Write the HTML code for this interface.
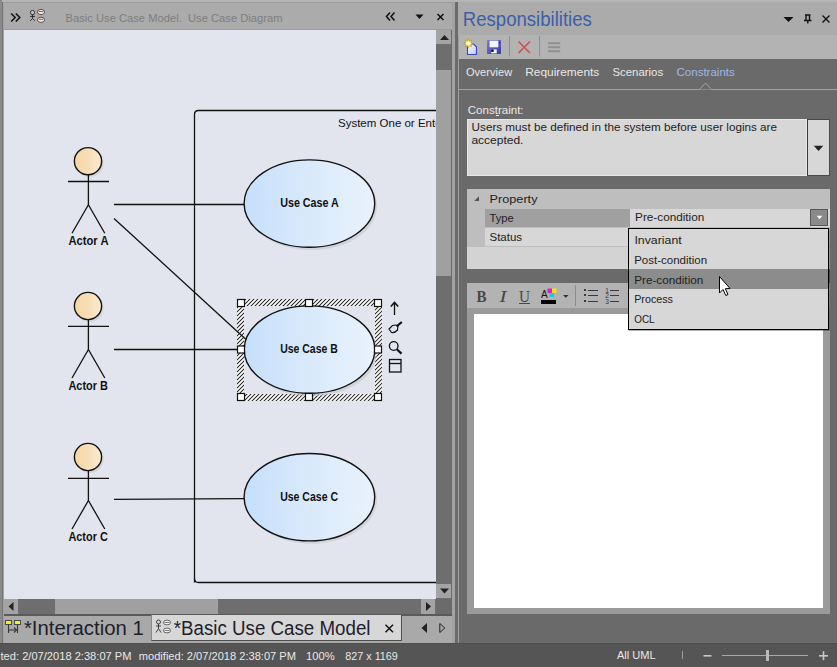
<!DOCTYPE html>
<html><head><meta charset="utf-8">
<style>
*{margin:0;padding:0;box-sizing:border-box}
html,body{width:837px;height:667px;overflow:hidden;background:#6a6a6a;font-family:"Liberation Sans",sans-serif}
.a{position:absolute}
.t{position:absolute;white-space:pre;line-height:1}
.lb{font-family:"Liberation Sans",sans-serif;font-weight:bold;font-size:12.5px;fill:#111}
.sys{font-family:"Liberation Sans",sans-serif;font-size:11.5px;fill:#111}
</style></head><body>
<div class="a" style="left:0;top:0;width:837px;height:2px;background:#b4b4b4"></div>
<div class="a" style="left:0;top:0;width:2px;height:643px;background:#8a8a8a"></div>
<div class="a" style="left:2px;top:2px;width:1px;height:641px;background:#767676"></div>
<div class="a" style="left:3px;top:2px;width:1px;height:641px;background:#a2a2a2"></div>

<!-- LEFT PANEL header -->
<div class="a" style="left:4px;top:2px;width:448px;height:1px;background:#9c9c9c"></div>
<div class="a" style="left:4px;top:3px;width:448px;height:26px;background:#ababab"></div>
<div class="a" style="left:4px;top:29px;width:448px;height:1px;background:#9c9c9c"></div>
<svg class="a" style="left:0;top:0" width="452" height="30" viewBox="0 0 452 30">
<g fill="none" stroke="#111" stroke-width="1.5">
<polyline points="11.2,13.4 15.2,17.5 11.2,21.6"/><polyline points="15.8,13.4 19.8,17.5 15.8,21.6"/>
<polyline points="390,12.5 386.5,16.5 390,20.5"/><polyline points="394.5,12.5 391,16.5 394.5,20.5"/>
<path d="M437.5 14 L443.5 20 M443.5 14 L437.5 20"/>
</g>
<path d="M415.5 14.5 H423.5 L419.5 19 Z" fill="#111"/>
<g fill="none" stroke="#222" stroke-width="0.9">
<circle cx="32.5" cy="12.5" r="2.1" fill="#c8c8c8"/><line x1="32.5" y1="14.6" x2="32.5" y2="18.4"/><line x1="30" y1="16.4" x2="35" y2="16.4"/>
<polyline points="30.2,20.8 32.5,18.4 34.8,20.8"/>
</g>
<g stroke="#444" stroke-width="0.9" fill="#fbe9da">
<ellipse cx="41" cy="12" rx="3.6" ry="2.6"/><ellipse cx="41" cy="19.8" rx="3.6" ry="2.6"/>
</g>
<g stroke="#444" stroke-width="0.8"><line x1="38.8" y1="11.5" x2="43.2" y2="11.5"/><line x1="38.8" y1="19.3" x2="43.2" y2="19.3"/></g>
</svg>

<div class="a" style="left:4px;top:30px;width:432px;height:569px;background:#e2e5ed"></div>
<svg class="a" style="left:0;top:0" width="437" height="599" viewBox="0 0 437 599">
<defs>
<linearGradient id="ag" x1="0" x2="1" y1="0" y2="0"><stop offset="0" stop-color="#f5d4a0"/><stop offset="1" stop-color="#fbe9cf"/></linearGradient>
<linearGradient id="ug" x1="0" x2="1" y1="0" y2="0"><stop offset="0" stop-color="#c5dffb"/><stop offset="0.45" stop-color="#d8e9fb"/><stop offset="1" stop-color="#e9f2fc"/></linearGradient>
<pattern id="hp" width="2.83" height="4" patternUnits="userSpaceOnUse" patternTransform="rotate(45)"><rect width="2.83" height="4" fill="#fff"/><rect width="0.85" height="4" fill="#111"/></pattern>
<clipPath id="cc"><rect x="4" y="30" width="432" height="569"/></clipPath>
</defs>
<g clip-path="url(#cc)">
<path d="M194.5 582.5 V114.5 Q194.5 110.5 198.5 110.5 H460" fill="none" stroke="#111" stroke-width="1.3"/>
<path d="M194.5 578.5 Q194.5 582.5 198.5 582.5 H460" fill="none" stroke="#111" stroke-width="1.3"/>
<text x="338" y="127" class="sys">System One or Enterprise</text>
<line x1="114" y1="204.5" x2="244" y2="204.5" stroke="#111" stroke-width="1.3"/>
<line x1="114" y1="349.5" x2="244" y2="349.5" stroke="#111" stroke-width="1.3"/>
<line x1="114" y1="499.3" x2="244" y2="498.6" stroke="#111" stroke-width="1.3"/>
<circle cx="89.6" cy="163.2" r="14" fill="#c4c6cc" opacity="0.5"/>
<circle cx="88" cy="161.2" r="13.6" fill="url(#ag)" stroke="#111" stroke-width="1.4"/>
<line x1="88.4" y1="174.7" x2="88.4" y2="204.7" stroke="#111" stroke-width="1.3"/>
<line x1="68" y1="181.5" x2="109" y2="181.5" stroke="#111" stroke-width="1.3"/>
<polyline points="72,233.2 88.4,204.7 104.8,233.2" fill="none" stroke="#111" stroke-width="1.3"/>
<text x="68.5" y="244.7" class="lb" textLength="40" lengthAdjust="spacingAndGlyphs">Actor A</text>

<circle cx="89.6" cy="308" r="14" fill="#c4c6cc" opacity="0.5"/>
<circle cx="88" cy="306" r="13.6" fill="url(#ag)" stroke="#111" stroke-width="1.4"/>
<line x1="88.4" y1="319.5" x2="88.4" y2="349.5" stroke="#111" stroke-width="1.3"/>
<line x1="68" y1="326.3" x2="109" y2="326.3" stroke="#111" stroke-width="1.3"/>
<polyline points="72,378 88.4,349.5 104.8,378" fill="none" stroke="#111" stroke-width="1.3"/>
<text x="68.4" y="389.5" class="lb" textLength="39.6" lengthAdjust="spacingAndGlyphs">Actor B</text>

<circle cx="89.6" cy="459" r="14" fill="#c4c6cc" opacity="0.5"/>
<circle cx="88" cy="457" r="13.6" fill="url(#ag)" stroke="#111" stroke-width="1.4"/>
<line x1="88.4" y1="470.5" x2="88.4" y2="500.5" stroke="#111" stroke-width="1.3"/>
<line x1="68" y1="478.3" x2="109" y2="478.3" stroke="#111" stroke-width="1.3"/>
<polyline points="72,529 88.4,500.5 104.8,529" fill="none" stroke="#111" stroke-width="1.3"/>
<text x="68.4" y="540.5" class="lb" textLength="39.4" lengthAdjust="spacingAndGlyphs">Actor C</text>

<ellipse cx="311.4" cy="206.1" rx="65.6" ry="44" fill="#c4c6cc" opacity="0.6"/>
<ellipse cx="309.4" cy="203.6" rx="65.3" ry="43.7" fill="url(#ug)" stroke="#111" stroke-width="1.4"/>
<text x="280.2" y="207.2" class="lb" textLength="58.6" lengthAdjust="spacingAndGlyphs">Use Case A</text>

<path fill-rule="evenodd" fill="url(#hp)" d="M237 299 H382 V401 H237 Z M244 306 H375 V394 H244 Z"/>
<line x1="114" y1="218.4" x2="246" y2="339.5" stroke="#111" stroke-width="1.3"/>
<ellipse cx="311.5" cy="352.1" rx="65.6" ry="44" fill="#c4c6cc" opacity="0.6"/>
<ellipse cx="309.5" cy="349.6" rx="65.3" ry="43.7" fill="url(#ug)" stroke="#111" stroke-width="1.4"/>
<text x="280.2" y="353.20000000000005" class="lb" textLength="57.6" lengthAdjust="spacingAndGlyphs">Use Case B</text>

<ellipse cx="311.4" cy="499.7" rx="65.6" ry="44" fill="#c4c6cc" opacity="0.6"/>
<ellipse cx="309.4" cy="497.2" rx="65.3" ry="43.7" fill="url(#ug)" stroke="#111" stroke-width="1.4"/>
<text x="280.2" y="500.8" class="lb" textLength="57.8" lengthAdjust="spacingAndGlyphs">Use Case C</text>

<rect x="237.5" y="299.5" width="7" height="7" fill="#fff" stroke="#111" stroke-width="1.2"/>
<rect x="237.5" y="346.0" width="7" height="7" fill="#fff" stroke="#111" stroke-width="1.2"/>
<rect x="237.5" y="393.5" width="7" height="7" fill="#fff" stroke="#111" stroke-width="1.2"/>
<rect x="305.5" y="299.5" width="7" height="7" fill="#fff" stroke="#111" stroke-width="1.2"/>
<rect x="305.5" y="393.5" width="7" height="7" fill="#fff" stroke="#111" stroke-width="1.2"/>
<rect x="374.5" y="299.5" width="7" height="7" fill="#fff" stroke="#111" stroke-width="1.2"/>
<rect x="374.5" y="346.0" width="7" height="7" fill="#fff" stroke="#111" stroke-width="1.2"/>
<rect x="374.5" y="393.5" width="7" height="7" fill="#fff" stroke="#111" stroke-width="1.2"/>

<g fill="none" stroke="#111" stroke-width="1.3">
<line x1="394.5" y1="303" x2="394.5" y2="315"/>
<path d="M390.8 306.5 L394.5 302.5 L398.2 306.5" stroke-width="1.6"/>
<path d="M389 329 L392.5 325.5 Q395.5 324.5 398 325.5 L397.5 330 Q395 333 391.5 332.5 Z" stroke-width="1.2"/>
<line x1="396.5" y1="326.5" x2="401.8" y2="322" stroke-width="2.2"/>
<circle cx="393.7" cy="346" r="4.3"/>
<line x1="396.8" y1="349.2" x2="401.5" y2="353.6" stroke-width="2.2"/>
<rect x="389.5" y="359.5" width="11.5" height="12.5"/>
<line x1="389.5" y1="363.5" x2="401" y2="363.5"/>
</g>
</g></svg>

<!-- vertical scrollbar -->
<div class="a" style="left:436px;top:30px;width:15px;height:569px;background:#6e6e6e"></div>
<div class="a" style="left:436px;top:30px;width:15px;height:14px;background:#a4a4a4"></div>
<div class="a" style="left:436px;top:70px;width:15px;height:206px;background:#a0a0a0"></div>
<div class="a" style="left:436px;top:584px;width:15px;height:14px;background:#a4a4a4"></div>
<svg class="a" style="left:437px;top:30px" width="14" height="14"><path d="M3 10 H12 L7.5 5 Z" fill="#222"/></svg>
<svg class="a" style="left:437px;top:584px" width="14" height="14"><path d="M3 4.5 H12 L7.5 9.5 Z" fill="#222"/></svg>

<!-- horizontal scrollbar -->
<div class="a" style="left:4px;top:599px;width:433px;height:15px;background:#6e6e6e"></div>
<div class="a" style="left:4px;top:599px;width:14px;height:15px;background:#a4a4a4"></div>
<div class="a" style="left:55px;top:599px;width:163px;height:15px;background:#a0a0a0"></div>
<div class="a" style="left:421px;top:599px;width:14px;height:15px;background:#a4a4a4"></div>
<div class="a" style="left:437px;top:599px;width:14px;height:15px;background:#6b6b6b"></div>
<svg class="a" style="left:4px;top:599px" width="14" height="15"><path d="M9.5 3 V12 L4.5 7.5 Z" fill="#222"/></svg>
<svg class="a" style="left:421px;top:599px" width="14" height="15"><path d="M5 3 V12 L10 7.5 Z" fill="#222"/></svg>

<!-- tab strip -->
<div class="a" style="left:4px;top:614px;width:448px;height:2px;background:#5a5a5a"></div>
<div class="a" style="left:4px;top:616px;width:448px;height:27px;background:#a9a9a9"></div>
<div class="a" style="left:151px;top:615px;width:251px;height:26px;background:#d7d7d7;border-left:1px solid #8a8a8a;border-right:1px solid #4e4e4e;border-bottom:1px solid #4e4e4e"></div>

<!-- separator strip between panels -->
<div class="a" style="left:452px;top:2px;width:3px;height:641px;background:#a2a2a2"></div>
<div class="a" style="left:455px;top:2px;width:3px;height:641px;background:#6b6b6b"></div>
<div class="a" style="left:458px;top:2px;width:1px;height:641px;background:#9e9e9e"></div>

<!-- RIGHT PANEL -->
<div class="a" style="left:458px;top:2px;width:379px;height:33px;background:#ababab"></div>
<svg class="a" style="left:770px;top:0" width="67" height="34" viewBox="770 0 67 34">
<path d="M783.5 17 H793.5 L788.5 22 Z" fill="#111"/>
<g fill="none" stroke="#111" stroke-width="1.4">
<path d="M805 15 H810.5 M806 15 V20 M809.5 15 V20 M804 20.5 H811.5 M807.8 20.5 V23.5"/>
<path d="M822.5 15.5 L829.5 22.5 M829.5 15.5 L822.5 22.5"/>
</g>
</svg>
<div class="a" style="left:459px;top:35px;width:378px;height:24px;background:#b3b3b3"></div>
<svg class="a" style="left:459px;top:34px" width="120" height="25" viewBox="459 34 120 25">
<defs><linearGradient id="dg" x1="0" x2="1" y1="0" y2="1"><stop offset="0" stop-color="#ffffff"/><stop offset="1" stop-color="#b8c8f0"/></linearGradient></defs>
<defs><linearGradient id="fg" x1="0" x2="1" y1="0" y2="1"><stop offset="0" stop-color="#7a7ae0"/><stop offset="1" stop-color="#3a3a98"/></linearGradient>
<radialGradient id="sg"><stop offset="0" stop-color="#ffffff"/><stop offset="0.45" stop-color="#fff8b0"/><stop offset="1" stop-color="#d8b800"/></radialGradient></defs>
<path d="M467.5 44 H473.5 L476.5 47 V54.5 H467.5 Z" fill="url(#dg)" stroke="#3d45b8" stroke-width="1.1"/>
<path d="M468.4 38.6 L469.4 41.2 L471.8 40 L470.8 42.5 L473.3 43.4 L470.8 44.3 L471.8 46.8 L469.4 45.6 L468.4 48.2 L467.4 45.6 L465 46.8 L466 44.3 L463.5 43.4 L466 42.5 L465 40 L467.4 41.2 Z" fill="url(#sg)" stroke="#b89a00" stroke-width="0.6"/>
<rect x="487" y="40" width="14" height="14" rx="0.8" fill="url(#fg)"/>
<rect x="489.6" y="40.7" width="8.7" height="6.6" fill="#f4f4ff"/>
<rect x="491.2" y="49.4" width="5.5" height="4" fill="#f0f0f0"/><rect x="491.2" y="49.4" width="2.5" height="2.5" fill="#111"/>
<rect x="499" y="42" width="1" height="1" fill="#222"/>
<line x1="509.5" y1="36" x2="509.5" y2="56.5" stroke="#8e8e8e"/>
<path d="M518.5 41.5 L530 53 M530 41.5 L518.5 53" stroke="#d05050" stroke-width="1.6"/>
<line x1="539.5" y1="36" x2="539.5" y2="56.5" stroke="#8e8e8e"/>
<g fill="#8f8f8f"><rect x="548" y="42.2" width="12.2" height="2"/><rect x="548" y="46.2" width="12.2" height="2"/><rect x="548" y="50.2" width="12.2" height="2"/></g>
</svg>
<div class="a" style="left:459px;top:59px;width:378px;height:584px;background:#6a6a6a"></div>
<div class="a" style="left:459px;top:89px;width:378px;height:1px;background:#a4a4a4"></div>

<div class="a" style="left:467px;top:119px;width:340px;height:57px;background:#d7d7d7;border:1px solid #e8e8e8"></div>
<div class="a" style="left:807px;top:119px;width:23px;height:57px;background:#d7d7d7;border:1px solid #4a4a4a;border-left-color:#3a3a3a"></div>

<!-- property grid -->
<div class="a" style="left:467px;top:189px;width:363px;height:80px;background:#bebebe"></div>
<div class="a" style="left:485px;top:209px;width:145px;height:18px;background:#a0a0a0"></div>
<div class="a" style="left:630px;top:209px;width:200px;height:18px;background:#d7d7d7"></div>
<div class="a" style="left:485px;top:228px;width:345px;height:18px;background:#d7d7d7"></div>
<div class="a" style="left:467px;top:247px;width:363px;height:22px;background:#d3d3d3"></div>
<div class="a" style="left:810px;top:209px;width:18px;height:17px;background:#8a8a8a;border:1px solid #555"></div>

<!-- editor -->
<div class="a" style="left:467px;top:283px;width:363px;height:331px;background:#9a9a9a"></div>
<div class="a" style="left:467px;top:283px;width:363px;height:25px;background:#b3b3b3"></div>
<div class="a" style="left:474px;top:314px;width:349px;height:294px;background:#fff"></div>

<!-- dropdown popup -->
<div class="a" style="left:628px;top:228px;width:201px;height:102px;background:#d7d7d7;border:1px solid #000;box-shadow:0.6px 0.6px 0 rgba(0,0,0,0.5)"></div>
<div class="a" style="left:629px;top:269px;width:199px;height:20px;background:#8c8c8c"></div>

<!-- status bar -->
<div class="a" style="left:0;top:643px;width:837px;height:24px;background:#555555"></div>
<div class="a" style="left:0;top:643px;width:837px;height:1px;background:#4e4e4e"></div>
<svg class="a" style="left:0;top:0" width="837" height="667" viewBox="0 0 837 667"><text x="65.5" y="22" textLength="217" lengthAdjust="spacingAndGlyphs" style="font-family:'Liberation Sans';font-size:11px;font-weight:400;fill:#7e7e7e;white-space:pre">Basic Use Case Model.  Use Case Diagram</text>
<text x="462.8" y="26" textLength="129" lengthAdjust="spacingAndGlyphs" style="font-family:'Liberation Sans';font-size:20px;font-weight:400;fill:#3c5fa8;white-space:pre">Responsibilities</text>
<text x="465.9" y="76" textLength="46.3" lengthAdjust="spacingAndGlyphs" style="font-family:'Liberation Sans';font-size:11.5px;font-weight:400;fill:#e8e8e8;white-space:pre">Overview</text>
<text x="525.2" y="76" textLength="74.1" lengthAdjust="spacingAndGlyphs" style="font-family:'Liberation Sans';font-size:11.5px;font-weight:400;fill:#e8e8e8;white-space:pre">Requirements</text>
<text x="612.4" y="76" textLength="50.7" lengthAdjust="spacingAndGlyphs" style="font-family:'Liberation Sans';font-size:11.5px;font-weight:400;fill:#e8e8e8;white-space:pre">Scenarios</text>
<text x="676.5" y="76" textLength="58.3" lengthAdjust="spacingAndGlyphs" style="font-family:'Liberation Sans';font-size:11.5px;font-weight:400;fill:#9fb6e6;white-space:pre">Constraints</text>
<text x="467.7" y="114" textLength="55.9" lengthAdjust="spacingAndGlyphs" style="font-family:'Liberation Sans';font-size:11px;font-weight:400;fill:#e8e8e8;white-space:pre">Constraint:</text>
<text x="471.6" y="131" textLength="305.4" lengthAdjust="spacingAndGlyphs" style="font-family:'Liberation Sans';font-size:11.5px;font-weight:400;fill:#222;white-space:pre">Users must be defined in the system before user logins are</text>
<text x="471.4" y="144" textLength="52" lengthAdjust="spacingAndGlyphs" style="font-family:'Liberation Sans';font-size:11.5px;font-weight:400;fill:#222;white-space:pre">accepted.</text>
<text x="489.5" y="203" textLength="48" lengthAdjust="spacingAndGlyphs" style="font-family:'Liberation Sans';font-size:11.5px;font-weight:400;fill:#222;white-space:pre">Property</text>
<text x="489.5" y="221.8" textLength="24.2" lengthAdjust="spacingAndGlyphs" style="font-family:'Liberation Sans';font-size:11.5px;font-weight:400;fill:#222;white-space:pre">Type</text>
<text x="489.5" y="240.7" textLength="32.6" lengthAdjust="spacingAndGlyphs" style="font-family:'Liberation Sans';font-size:11.5px;font-weight:400;fill:#222;white-space:pre">Status</text>
<text x="635.1" y="220.6" textLength="69.2" lengthAdjust="spacingAndGlyphs" style="font-family:'Liberation Sans';font-size:11.5px;font-weight:400;fill:#222;white-space:pre">Pre-condition</text>
<text x="634.4" y="243.8" textLength="47.3" lengthAdjust="spacingAndGlyphs" style="font-family:'Liberation Sans';font-size:11.5px;font-weight:400;fill:#222;white-space:pre">Invariant</text>
<text x="634.2" y="263.8" textLength="72.9" lengthAdjust="spacingAndGlyphs" style="font-family:'Liberation Sans';font-size:11.5px;font-weight:400;fill:#222;white-space:pre">Post-condition</text>
<text x="634.2" y="283.6" textLength="69.1" lengthAdjust="spacingAndGlyphs" style="font-family:'Liberation Sans';font-size:11.5px;font-weight:400;fill:#222;white-space:pre">Pre-condition</text>
<text x="634.2" y="303.4" textLength="38.8" lengthAdjust="spacingAndGlyphs" style="font-family:'Liberation Sans';font-size:11.5px;font-weight:400;fill:#222;white-space:pre">Process</text>
<text x="634.2" y="323.4" textLength="20.4" lengthAdjust="spacingAndGlyphs" style="font-family:'Liberation Sans';font-size:11.5px;font-weight:400;fill:#222;white-space:pre">OCL</text>
<text x="23.9" y="634.6" textLength="119.9" lengthAdjust="spacingAndGlyphs" style="font-family:'Liberation Sans';font-size:19.5px;font-weight:400;fill:#1e1e2a;white-space:pre">*Interaction 1</text>
<text x="173.7" y="634.6" textLength="196.8" lengthAdjust="spacingAndGlyphs" style="font-family:'Liberation Sans';font-size:19.5px;font-weight:400;fill:#1e1e2a;white-space:pre">*Basic Use Case Model</text>
<text x="0.5" y="659.7" textLength="131" lengthAdjust="spacingAndGlyphs" style="font-family:'Liberation Sans';font-size:11px;font-weight:400;fill:#e8e8e8;white-space:pre">ted: 2/07/2018 2:38:07 PM</text>
<text x="138.8" y="659.7" textLength="157.2" lengthAdjust="spacingAndGlyphs" style="font-family:'Liberation Sans';font-size:11px;font-weight:400;fill:#e8e8e8;white-space:pre">modified: 2/07/2018 2:38:07 PM</text>
<text x="306" y="659.7" textLength="28.7" lengthAdjust="spacingAndGlyphs" style="font-family:'Liberation Sans';font-size:11px;font-weight:400;fill:#e8e8e8;white-space:pre">100%</text>
<text x="345.3" y="659.7" textLength="52.5" lengthAdjust="spacingAndGlyphs" style="font-family:'Liberation Sans';font-size:11px;font-weight:400;fill:#e8e8e8;white-space:pre">827 x 1169</text>
<text x="617" y="659.3" textLength="38.7" lengthAdjust="spacingAndGlyphs" style="font-family:'Liberation Sans';font-size:11px;font-weight:400;fill:#e8e8e8;white-space:pre">All UML</text>
</svg>

<!-- extra icons -->
<svg class="a" style="left:0;top:0" width="837" height="667" viewBox="0 0 837 667">
<!-- tab notch -->
<path d="M699.5 89.5 L705.5 83 L711.5 89.5" fill="#6a6a6a" stroke="#a4a4a4" stroke-width="1"/>
<!-- underline r -->
<rect x="496" y="115" width="3" height="1" fill="#e8e8e8"/>
<!-- constraint dropdown arrow -->
<path d="M813.8 145.8 H823.3 L818.5 151 Z" fill="#222"/>
<!-- property triangle -->
<path d="M479 196.3 V201 H474.2 Z" fill="#555"/>
<!-- type dropdown arrow -->
<path d="M816.8 215.8 H822.3 L819.5 219.2 Z" fill="#fff"/>
<!-- editor toolbar -->
<text x="476.5" y="302" style="font-family:'Liberation Serif';font-weight:bold;font-size:16.5px;fill:#474747" textLength="10" lengthAdjust="spacingAndGlyphs">B</text>
<text x="499.5" y="302" style="font-family:'Liberation Serif';font-style:italic;font-size:16.5px;fill:#474747" textLength="7" lengthAdjust="spacingAndGlyphs">I</text>
<text x="519" y="302" style="font-family:'Liberation Serif';font-size:16.5px;fill:#474747" textLength="11" lengthAdjust="spacingAndGlyphs">U</text>
<rect x="519" y="303" width="11" height="1" fill="#474747"/>
<text x="541" y="297.5" style="font-family:'Liberation Sans';font-size:10px;fill:#111">A</text>
<rect x="547.5" y="288.5" width="4.5" height="4.5" fill="#e020d0"/>
<rect x="552" y="288.5" width="4.5" height="4.5" fill="#f0e020"/>
<rect x="549.5" y="293" width="4.5" height="4" fill="#20c8e0"/>
<rect x="541" y="300" width="15" height="4" fill="#000"/>
<path d="M563 295 H568.5 L565.8 297.8 Z" fill="#333"/>
<line x1="575.5" y1="285" x2="575.5" y2="306" stroke="#8c8c8c"/>
<g fill="#3a3a3a"><rect x="584" y="289" width="2" height="2"/><rect x="584" y="294" width="2" height="2"/><rect x="584" y="300" width="2" height="2"/>
<rect x="588" y="290" width="10" height="1"/><rect x="588" y="295" width="10" height="1"/><rect x="588" y="301" width="10" height="1"/>
<rect x="610" y="290" width="9" height="1"/><rect x="610" y="295" width="9" height="1"/><rect x="610" y="301" width="9" height="1"/></g>
<text x="605.2" y="292.8" style="font-family:'Liberation Sans';font-size:6.6px;fill:#3a3a3a">1</text>
<text x="605.2" y="298.3" style="font-family:'Liberation Sans';font-size:6.6px;fill:#3a3a3a">2</text>
<text x="605.2" y="303.8" style="font-family:'Liberation Sans';font-size:6.6px;fill:#3a3a3a">3</text>
<!-- cursor -->
<path d="M719.5 276.5 V293 L723 289.5 L725.8 295.5 L728 294.5 L725.3 288.7 L730 288.5 Z" fill="#fff" stroke="#000" stroke-width="1"/>
<!-- bottom tab icons -->
<rect x="5.5" y="620.5" width="6" height="4" fill="#f4f020" stroke="#4a4a4a" stroke-width="1"/>
<rect x="14.5" y="620.5" width="6" height="4" fill="#f4f020" stroke="#4a4a4a" stroke-width="1"/>
<g stroke="#3a3a3a" stroke-width="1.1" fill="none"><line x1="8.5" y1="624.5" x2="8.5" y2="633"/><line x1="17.5" y1="624.5" x2="17.5" y2="633"/><line x1="8.5" y1="630" x2="16.5" y2="630"/><path d="M14 627.5 L16.5 630 L14 632.5"/></g>
<g fill="none" stroke="#333" stroke-width="0.9">
<circle cx="158.5" cy="622" r="2"/><line x1="158.5" y1="624" x2="158.5" y2="628.5"/><line x1="156" y1="626" x2="161" y2="626"/><polyline points="156,632.5 158.5,628.5 161,632.5"/>
</g>
<g stroke="#555" stroke-width="0.9" fill="#f2f2f2"><ellipse cx="167" cy="622.5" rx="3.6" ry="2.4"/><ellipse cx="167" cy="630.5" rx="3.6" ry="2.4"/></g>
<g stroke="#555" stroke-width="0.8"><line x1="164.5" y1="622.5" x2="169.5" y2="622.5"/><line x1="164.5" y1="630.5" x2="169.5" y2="630.5"/></g>
<path d="M385.5 624.8 L393 632.2 M393 624.8 L385.5 632.2" stroke="#111" stroke-width="1.5"/>
<path d="M427 623 V633 L421.5 628 Z" fill="#222"/>
<path d="M439.8 623.5 V632.5 L444.8 628 Z" fill="none" stroke="#222" stroke-width="1"/>
<!-- status bar right -->
<line x1="682.5" y1="651" x2="682.5" y2="659" stroke="#9a9a9a"/>
<rect x="703.5" y="655" width="8" height="1.6" fill="#c8c8c8"/>
<rect x="722" y="655" width="86" height="1" fill="#a8a8a8"/>
<rect x="766" y="650" width="3" height="11" fill="#b8b8b8"/>
<rect x="819" y="655" width="9" height="1.6" fill="#c8c8c8"/><rect x="822.7" y="651.2" width="1.6" height="9" fill="#c8c8c8"/>
</svg>

</body></html>
